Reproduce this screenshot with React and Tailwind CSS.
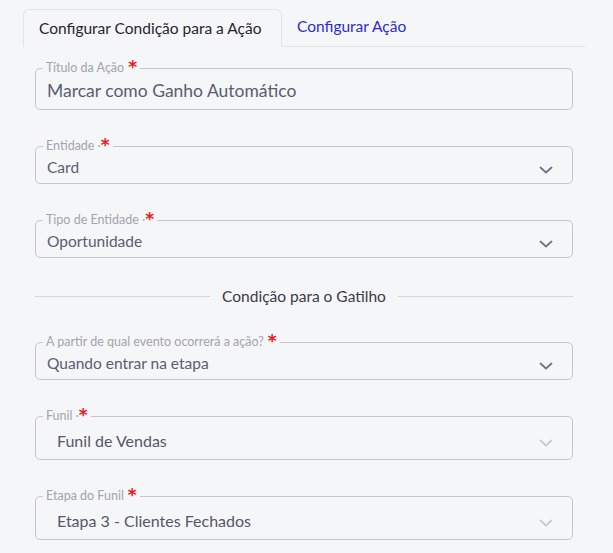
import React from "react";

const fields = [
  { label: "Título da Ação", value: "Marcar como Ganho Automático", kind: "input", dot: false },
  { label: "Entidade", value: "Card", kind: "select", dot: true },
  { label: "Tipo de Entidade", value: "Oportunidade", kind: "select", dot: true },
];

const trigger = [
  { label: "A partir de qual evento ocorrerá a ação?", value: "Quando entrar na etapa", kind: "select", dot: false },
  { label: "Funil", value: "Funil de Vendas", kind: "locked", dot: true },
  { label: "Etapa do Funil", value: "Etapa 3 - Clientes Fechados", kind: "locked", dot: false },
];

const Chevron = ({ light }) => (
  <svg
    width="14"
    height="8"
    viewBox="0 0 14 8"
    fill="none"
    stroke={light ? "#c9cad0" : "#70738a"}
    strokeWidth="1.8"
    strokeLinecap="round"
    strokeLinejoin="round"
  >
    <path d="M1.5 1.5 L7 6.5 L12.5 1.5" />
  </svg>
);

const Field = ({ field }) => {
  // tamanho do campo muda conforme o tipo
  const body =
    field.kind === "input"
      ? "h-[35px] pl-[11px] text-[17.5px] text-[#5a5d70]"
      : field.kind === "locked"
      ? "h-[37px] pl-[21px] pr-[19px] text-[16px] text-[#55576a]"
      : "h-[31px] pl-[11px] pr-[19px] text-[15.5px] text-[#5a5d70]";

  return (
    <fieldset className="border border-[#c5c6cc] rounded-[5px] bg-[#f5f6f8]">
      <legend className="ml-[7px] px-[3px]">
        <span className="flex items-center h-[12px] text-[12.5px] leading-[12px] text-[#a3a4ad]">
          {field.label}
          {field.dot && <span className="text-[#b0b1b8] ml-[3px] -mr-[1px]">·</span>}
          <span
            className={`font-['DejaVu_Sans'] font-bold text-[#f01818] text-[17px] leading-[12px] -mt-[3px] ${
              field.dot ? "ml-[1px]" : "ml-[4px]"
            }`}
          >
            *
          </span>
        </span>
      </legend>
      <div className={`flex items-center justify-between ${body}`}>
        <span>{field.value}</span>
        {field.kind !== "input" && (
          <span className="mt-[5px] flex">
            <Chevron light={field.kind === "locked"} />
          </span>
        )}
      </div>
    </fieldset>
  );
};

export default function App() {
  return (
    <div
      className="min-h-[553px] bg-[#f5f6f8] pl-[23px] pr-[28px] pt-[8px]"
      style={{ fontFamily: "Lato, 'Noto Sans', sans-serif" }}
    >
      {/* abas */}
      <div className="flex items-end border-b border-[#e3e4e9]">
        <div className="h-[38px] w-[259px] -mb-px flex items-center pl-[15px] rounded-t-[6px] border border-b-0 border-[#e3e4e9] bg-[#f5f6f8] text-[15.5px] text-[#26262e]">
          Configurar Condição para a Ação
        </div>
        <div className="h-[38px] px-[15px] flex items-center text-[15.5px] text-[#2b2bd6]">
          Configurar Ação
        </div>
      </div>

      <div className="px-[12px] pt-[15px] flex flex-col gap-[30px]">
        {fields.map((f) => (
          <Field key={f.label} field={f} />
        ))}
      </div>

      {/* divisor */}
      <div className="px-[12px] mt-[30px] flex items-center gap-[12px]">
        <div className="flex-1 h-px bg-[#d6d7dc]" />
        <span className="text-[15.5px] text-[#3a3b48] leading-[16px]">Condição para o Gatilho</span>
        <div className="flex-1 h-px bg-[#d6d7dc]" />
      </div>

      <div className="px-[12px] pt-[32px] flex flex-col gap-[30px]">
        {trigger.map((f) => (
          <Field key={f.label} field={f} />
        ))}
      </div>
    </div>
  );
}
